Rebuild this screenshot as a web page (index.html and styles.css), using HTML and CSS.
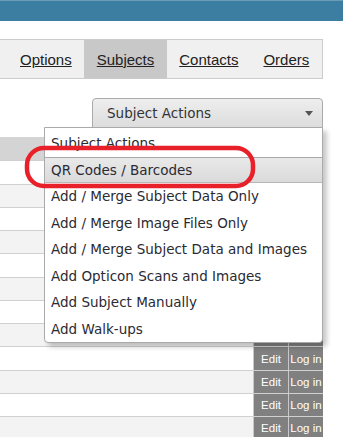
FILE: index.html
```html
<!DOCTYPE html>
<html lang="en">
<head>
    <meta charset="UTF-8">
    <meta name="viewport" content="width=device-width, initial-scale=1.0">
    <title>Subjects</title>
    <link rel="stylesheet" href="styles.css">
</head>
<body>
    <div class="topbar"></div>

    <div class="page">
        <!-- Main tabs -->
        <ul class="tabs">
            <li><a href="#">Options</a></li>
            <li class="active"><a href="#">Subjects</a></li>
            <li><a href="#">Contacts</a></li>
            <li><a href="#">Orders</a></li>
        </ul>

        <div class="actions">
            <div class="select">
                <span>Subject Actions</span>
                <span class="arrow"></span>
            </div>

            <!-- Open dropdown -->
            <ul class="menu">
                <li>Subject Actions</li>
                <li class="hover">QR Codes / Barcodes</li>
                <li>Add / Merge Subject Data Only</li>
                <li>Add / Merge Image Files Only</li>
                <li>Add / Merge Subject Data and Images</li>
                <li>Add Opticon Scans and Images</li>
                <li>Add Subject Manually</li>
                <li>Add Walk-ups</li>
            </ul>

            <svg class="marker" width="233" height="45" viewBox="0 0 233 45">
                <rect x="3" y="3" width="226" height="38" rx="17" ry="17" fill="none" stroke="#e8202a" stroke-width="4.5"/>
            </svg>
        </div>

        <!-- Subjects table (mostly under the dropdown) -->
        <div class="table">
            <div class="row head"></div>
            <div class="row"><div class="fill"></div><div class="btn">Edit</div><div class="btn">Log in</div></div>
            <div class="row"><div class="fill"></div><div class="btn">Edit</div><div class="btn">Log in</div></div>
            <div class="row"><div class="fill"></div><div class="btn">Edit</div><div class="btn">Log in</div></div>
            <div class="row"><div class="fill"></div><div class="btn">Edit</div><div class="btn">Log in</div></div>
            <div class="row"><div class="fill"></div><div class="btn">Edit</div><div class="btn">Log in</div></div>
            <div class="row"><div class="fill"></div><div class="btn">Edit</div><div class="btn">Log in</div></div>
            <div class="row"><div class="fill"></div><div class="btn">Edit</div><div class="btn">Log in</div></div>
            <div class="row"><div class="fill"></div><div class="btn">Edit</div><div class="btn">Log in</div></div>
            <div class="row"><div class="fill"></div><div class="btn">Edit</div><div class="btn">Log in</div></div>
            <div class="row"><div class="fill"></div><div class="btn">Edit</div><div class="btn">Log in</div></div>
            <div class="row"><div class="fill"></div><div class="btn">Edit</div><div class="btn">Log in</div></div>
            <div class="row"><div class="fill"></div><div class="btn">Edit</div><div class="btn">Log in</div></div>
        </div>
    </div>
</body>
</html>
```

FILE: styles.css
```css
body {
    margin: 0;
    font-family: "Liberation Sans", Arial, sans-serif;
    background: #ffffff;
    overflow: hidden;
}
.topbar {
    height: 20px;
    background-color: #3b7ea1;
    border-top: 1px solid #6b9bb6;
}
.page {
    width: 323px;
}

/* Tabs */
.tabs {
    list-style: none;
    margin: 18px 0 0 0;
    padding: 0 0 0 7px;
    display: flex;
    height: 38px;
    background: #f0f0f0;
    border: 1px solid #cccccc;
    border-left: none;
}
.tabs li {
    display: flex;
    align-items: center;
    padding: 0 12.5px;
}
.tabs li:first-child {
    padding-left: 13px;
}
.tabs li:last-child {
    padding-right: 14px;
}
.tabs li.active {
    background: #c8c8c8;
}
.tabs a {
    font-size: 15px;
    color: #222222;
    text-decoration: underline;
}

/* Subject actions select */
.actions {
    position: relative;
    margin-top: 19px;
    display: flex;
    justify-content: flex-end;
}
.select {
    box-sizing: border-box;
    width: 231px;
    height: 30px;
    display: flex;
    align-items: center;
    padding: 0 9px 0 14px;
    border: 1px solid #aaaaaa;
    border-radius: 4px 4px 0 0;
    background: linear-gradient(#eeeeee, #dddddd);
    font-family: "DejaVu Sans", Verdana, sans-serif;
    font-size: 13.5px;
    color: #333333;
}
.arrow {
    margin-left: auto;
    width: 0;
    height: 0;
    border-left: 4px solid transparent;
    border-right: 4px solid transparent;
    border-top: 5px solid #555555;
}
.menu {
    position: absolute;
    top: 29px;
    right: 0;
    width: 279px;
    box-sizing: border-box;
    margin: 0;
    padding: 2px 0 0 0;
    list-style: none;
    background: #ffffff;
    border: 1px solid #aaaaaa;
    border-radius: 0 0 4px 4px;
    box-shadow: 4px 4px 5px rgba(0, 0, 0, 0.22);
    font-family: "DejaVu Sans", Verdana, sans-serif;
    font-size: 13.5px;
    color: #2a2a33;
    z-index: 2;
}
.menu li {
    box-sizing: border-box;
    height: 26.5px;
    line-height: 26.5px;
    padding-left: 6px;
    white-space: nowrap;
}
.menu li.hover {
    background: linear-gradient(#e9e9e9, #dadada);
    border-top: 1px solid #a8a8a8;
    border-bottom: 1px solid #b8b8b8;
    line-height: 24.5px;
}
.marker {
    position: absolute;
    left: 24px;
    top: 47px;
    z-index: 3;
}

/* Table behind */
.table {
    margin-top: 9px;
}
.row {
    box-sizing: border-box;
    height: 23.27px;
    display: flex;
    border-top: 1px solid #d0d0d0;
    background: #ffffff;
}
.row:nth-child(odd) {
    background: #f3f3f3;
}
.row.head {
    border-top: none;
    background: #d4d4d4;
}
.fill {
    flex: 1;
}
.btn {
    width: 34px;
    background: #808080;
    border-left: 1px solid #c8c8c8;
    color: #ffffff;
    font-size: 11.5px;
    display: flex;
    align-items: center;
    justify-content: center;
}
```
